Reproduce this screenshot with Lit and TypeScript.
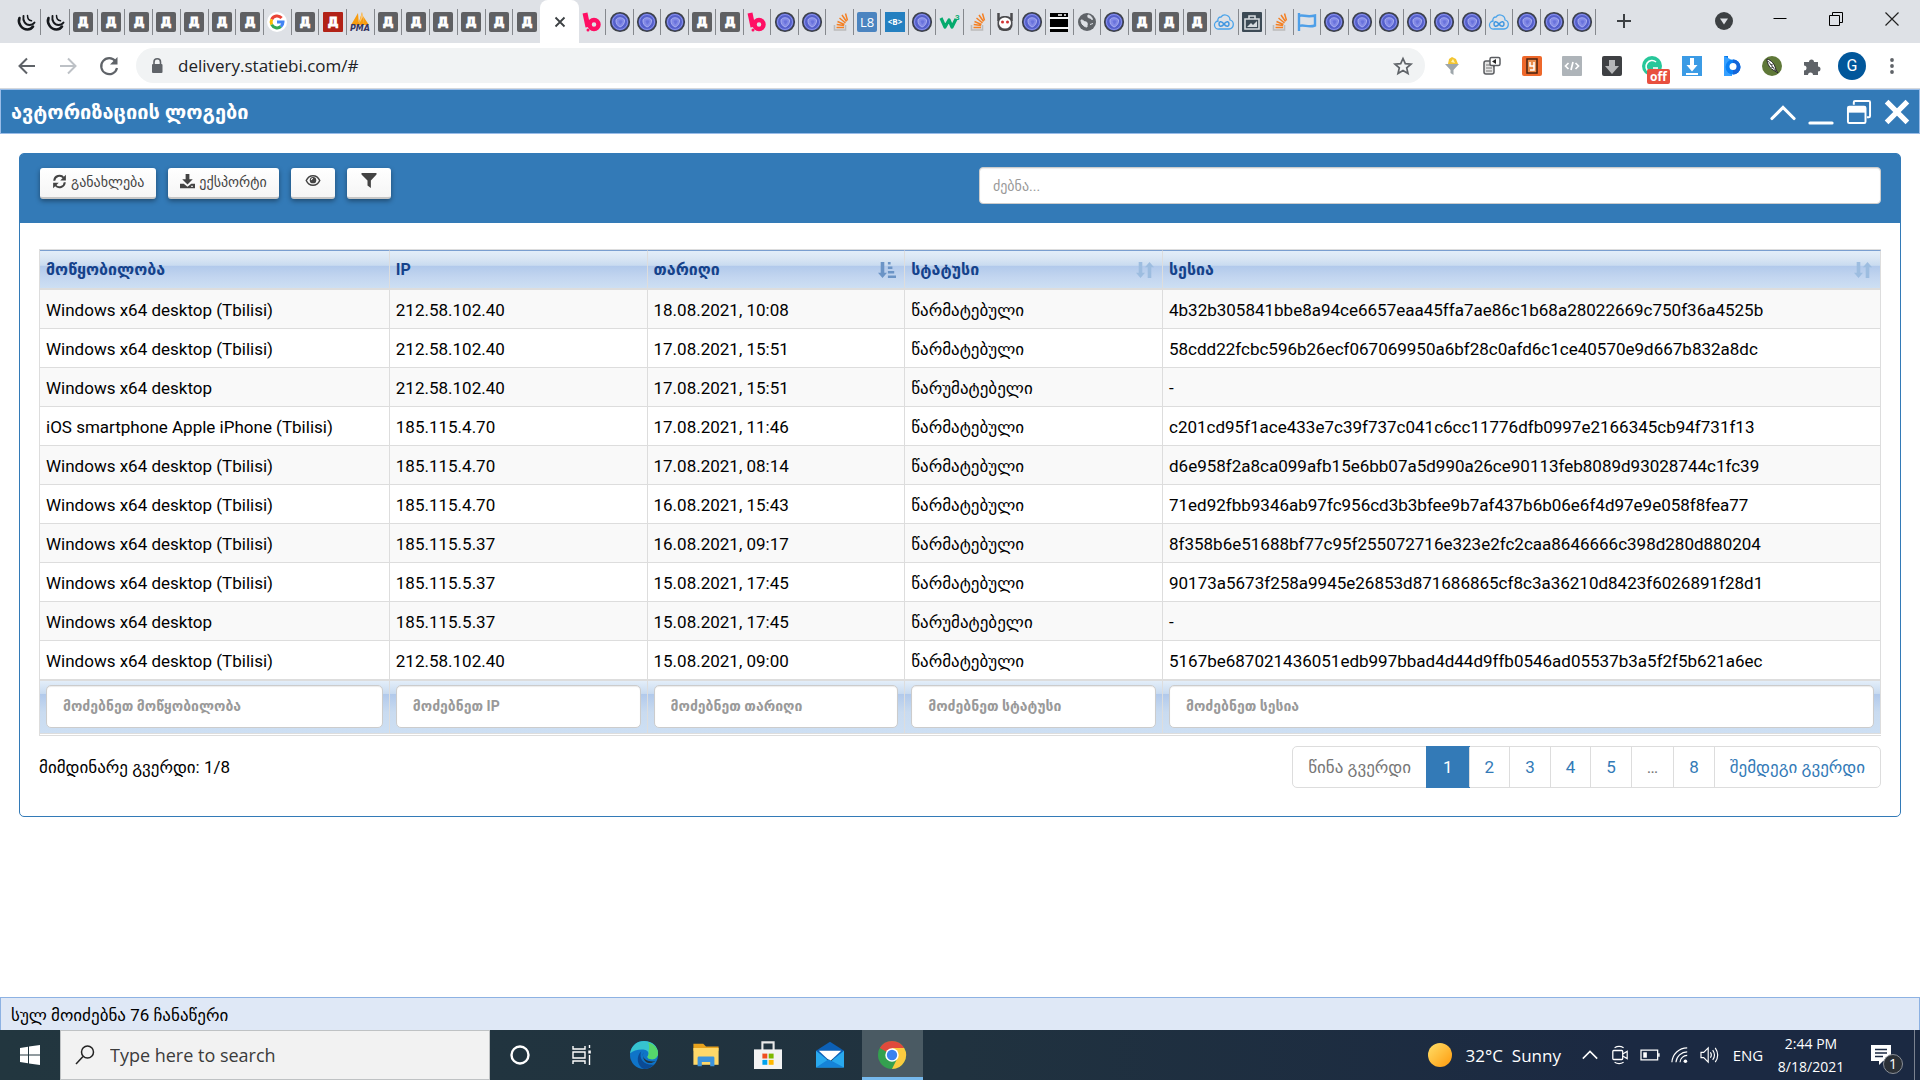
import { LitElement, html, svg, css, nothing } from "lit";
import { customElement, property } from "lit/decorators.js";

type Art = ReturnType<typeof svg>;

const letter = svg`<text x="10" y="14" text-anchor="middle" font-size="12" font-weight="bold" fill="#fff" stroke="#fff" stroke-width=".8" font-family="DejaVu Sans">Д</text>`;

const ART: Record<string, Art> = {
  swirl: svg`<g fill="none" stroke="#15181c" stroke-linecap="round"><path d="M3.500 6c-2 5 2 11.500 8 11.500 3 0 4.500-1.500 5.500-3" stroke-width="2.600"/><path d="M7.500 4c-1 5 2 9 6 9 2.500 0 4-1 5-2.500" stroke-width="1.900"/><path d="M11.500 3.500c0 3 1.500 5 4 5.300" stroke-width="1.500"/></g>`,
  mono: svg`<rect width="20" height="20" rx="2" fill="#5f6063"/>${letter}`,
  red: svg`<rect width="20" height="20" rx="1" fill="#b22217"/>${letter}`,
  google: svg`<circle cx="10" cy="10" r="10" fill="#fff"/><g fill="none" stroke-width="3"><path d="M14.600 6A6 6 0 0 0 4.700 7.400" stroke="#ea4335"/><path d="M4.700 7.400a6 6 0 0 0 0 5.200" stroke="#fbbc05"/><path d="M4.700 12.600a6 6 0 0 0 9.200 1.900" stroke="#34a853"/><path d="M13.900 14.500A6 6 0 0 0 16 10h-6" stroke="#4285f4"/></g>`,
  pma: svg`<path d="M1 13 8 1l1 12zM8 13l4-13 2 13zM14 13l-1-9 6 9z" fill="#f89c0e"/><path d="M9 12 12 0l1 5z" fill="#fbc774"/><text x="10" y="19" text-anchor="middle" font-size="8" font-weight="bold" font-style="italic" fill="#34345f" font-family="DejaVu Sans">PMA</text>`,
  pink: svg`<g fill="none" stroke="#ff0f64"><path d="M3 1l3 14" stroke-width="5"/><circle cx="12" cy="12.500" r="4.500" stroke-width="4.500"/></g><circle cx="6" cy="18" r="1.500" fill="#ff0f64"/>`,
  orb: svg`<circle cx="10" cy="10" r="9.300" fill="#5560cc" stroke="#3d4148" stroke-width="1.600"/><circle cx="10" cy="10" r="7.500" fill="none" stroke="#8a92ea" stroke-width="1"/><path d="M6 8c1-3 7-3 8.500 0 .5 3-2 6.500-4.500 7-2.500-1-4.500-4-4-7z" fill="#8289e6" stroke="#b6bbf4" stroke-width=".8"/><path d="M8.500 9c1-1 3-1 4 0-.5 2-1.500 3-2.500 3.500z" fill="#6a73dc"/>`,
  stack: svg`<path d="M4.500 13v5h11v-5" fill="none" stroke="#bcbbbb" stroke-width="1.600"/><g stroke="#f48024" stroke-width="1.500"><path d="M6.500 15.500h7.500M6.700 12.500l7.300 1M7.500 9.500l7 3M9.500 6l6 5M12 3l4.500 6.500M15.500 1.500l2 7"/></g>`,
  l8: svg`<rect width="20" height="20" rx="2" fill="#4b84c0"/><text x="10" y="15" text-anchor="middle" font-size="13" fill="#fff" font-family="Open Sans">L8</text>`,
  bold: svg`<rect width="20" height="20" fill="#2480c0"/><text x="10" y="13" text-anchor="middle" font-size="8" font-weight="bold" fill="#fff" font-family="Open Sans">&lt;B&gt;</text>`,
  w3: svg`<path d="M1 6l4 9 4-7 3 7 4-8" fill="none" stroke="#04aa6d" stroke-width="3.200" stroke-linejoin="round"/><text x="15" y="8" font-size="8" font-weight="bold" fill="#04aa6d" font-family="Roboto">3</text>`,
  hub: svg`<path d="M3.500 1v8M16.500 1v8" stroke="#4b4b4e" stroke-width="2.500"/><rect x="2.500" y="4" width="15" height="15" rx="6" fill="#4b4b4e"/><ellipse cx="10" cy="11" rx="6" ry="5.500" fill="#fff"/><circle cx="7.500" cy="10" r="1.500" fill="#d13434"/><circle cx="12.500" cy="10" r="1.500" fill="#d13434"/>`,
  screen: svg`<path d="M1 1h18v4H1zM1 7h18v8H1zM1 17h18v3H1z" fill="#000"/><path d="M0 6h20M0 16h20" stroke="#fff" stroke-width="1.500"/><path d="M9 3h4M15 3h2" stroke="#fff" stroke-width="1.400"/>`,
  globe: svg`<circle cx="10" cy="10" r="9" fill="#5f6368"/><path d="M4 8c2-.5 3 2 5 2s1 3 1 5c-3 0-6-3-6-7zM11 3c2 0 4 2 4.500 4.500-2 0-1.500-1.500-3-1.500s-2-1-1.500-3zM13 12.500l3-1" fill="#dee1e6" stroke="#dee1e6"/>`,
  cloud: svg`<path d="M5 17a4 4 0 0 1-1-8 3 3 0 0 1 3-4 5 5 0 0 1 9 3 4.600 4.600 0 0 1-1 9z" fill="none" stroke="#4aa3ea" stroke-width="1.300"/><path d="M10 12c-3-4-5-2-5 0s2 4 5 0 5-2 5 0-2 4-5 0z" fill="none" stroke="#3f96e0" stroke-width="1.500"/>`,
  bag: svg`<rect width="20" height="20" rx="1" fill="#3c4a55"/><path d="M3 7h14v10H3zM7 7V4h6v3" fill="none" stroke="#d6dbdf" stroke-width="1.600"/><path d="M5 15l4-4 2 2 4-4v6z" fill="#d6dbdf"/>`,
  flag: svg`<path d="M2 1v18M2 4c4-2 7 2 16-.500v10c-7 2.500-11-1.500-16 .5" fill="none" stroke="#4e9fe8" stroke-width="2.400"/>`,
  close: svg`<path d="M5.500 5.500l9 9m0-9l-9 9" stroke="#3c4043" stroke-width="1.800"/>`,
  plus: svg`<path d="M10 3v14M3 10h14" stroke="#3c4043" stroke-width="2"/>`,
  chevdisc: svg`<circle cx="10" cy="10" r="9" fill="#3c4043"/><path d="M6 7.500h8l-4 6z" fill="#dee1e6"/>`,
  min: svg`<path d="M3.500 9.500h13" stroke="#000"/>`,
  max: svg`<path d="M3.500 6.500h10v10h-10zM6.500 6.500v-3h10v10h-3" fill="none" stroke="#000"/>`,
  cross: svg`<path d="M3.500 3.500l13 13m0-13l-13 13" stroke="#222" stroke-width="1.200"/>`,
  back: svg`<path d="M18 10H3m7-7.500L2.500 10l7.500 7.500" fill="none" stroke="#5f6368" stroke-width="2"/>`,
  fwd: svg`<path d="M2 10h15m-7-7.500 7.500 7.500-7.500 7.500" fill="none" stroke="#bdc1c6" stroke-width="2"/>`,
  reload: svg`<path d="M16.500 5.200A8 8 0 1 0 18 12" fill="none" stroke="#5f6368" stroke-width="2.200"/><path d="M18.500 1v7.500H11z" fill="#5f6368"/>`,
  lock: svg`<rect x="5" y="8" width="10.500" height="9" rx="1" fill="#5f6368"/><path d="M7 8.500V6a3.200 3.200 0 0 1 6.500 0v2.500" fill="none" stroke="#5f6368" stroke-width="1.600"/>`,
  star: svg`<path d="M10 2.500l2.300 5.200 5.700.5-4.300 3.700 1.300 5.600-5-3-5 3 1.300-5.600L2 8.200l5.700-.5z" fill="none" stroke="#5f6368" stroke-width="1.700"/>`,
  funnel: svg`<path d="M3 8h14l-5.500 6v5l-3-2v-3z" fill="#9ea6ab"/><path d="M6 8l1-5 3-2 4 2 2 5z" fill="#f3c530"/><path d="M9 6l2-3 2 4z" fill="#fff3b0"/>`,
  copy: svg`<rect x="2" y="5" width="10" height="13" rx="2" fill="#e4e4e4" stroke="#5a5c60" stroke-width="1.500"/><path d="M4 9h5M4 12h6M4 15h6" stroke="#777"/><rect x="8" y="1.500" width="10" height="8" rx="1.500" fill="#fff" stroke="#5a5c60" stroke-width="1.500"/><path d="M14 3l-4 2.500L14 8z" fill="#222"/><path d="M11 9v3l3-3" fill="#5a5c60"/>`,
  orange: svg`<rect width="20" height="20" rx="2" fill="#ee682b"/><rect x="5" y="3" width="10" height="14" fill="#e98b4a" stroke="#47200f" stroke-width="1.500"/><path d="M8 6v4h4V6m0 3v5H8" fill="none" stroke="#fff" stroke-width="1.500"/>`,
  code: svg`<rect width="20" height="20" rx="1" fill="#aeb4b9"/><path d="M6.500 7L3.500 10l3 3M13.500 7l3 3-3 3M11 6l-2 8" fill="none" stroke="#fff" stroke-width="1.700"/>`,
  dark: svg`<rect width="20" height="20" rx="2" fill="#3e4043"/><path d="M7 4h6v6h4l-7 8-7-8h4z" fill="#b5b6b8"/>`,
  grammar: svg`<circle cx="10" cy="10" r="10" fill="#27c79a"/><path d="M14 6a6 6 0 1 0 1.500 7M11 12h5" fill="none" stroke="#fff" stroke-width="1.600"/>`,
  bluedown: svg`<rect width="20" height="20" fill="#3b9be5"/><path d="M8 2h4v7h3.500L10 15.500 4.500 9H8zM4 17h12v2H4z" fill="#fff"/>`,
  pblue: svg`<path d="M2 0h4v20L2 17z" fill="#0877e8"/><path d="M2 0l8 4v16H2z" fill="#36a0ff"/><circle cx="11" cy="11" r="7.500" fill="#0a80f5"/><path d="M11 3.500a7.500 7.500 0 0 1 0 15z" fill="#1565d8"/><circle cx="11" cy="10.500" r="3.500" fill="#fff"/>`,
  leaf: svg`<circle cx="10" cy="10" r="10" fill="#5f7838"/><path d="M5 3c4 1 8 5 9 11l2 3-3-2C8 13 5 8 5 3z" fill="#fff" stroke="#222"/><path d="M6 5l8 10M8 8l3 1M9 11l3 1" stroke="#333" stroke-width=".8"/>`,
  puzzle: svg`<path d="M2 6h5a2.500 2.500 0 1 1 5 0h4v4.500a2.500 2.500 0 1 1 0 5V19h-5a2.500 2.500 0 0 0-5 0H2v-4.500a2.500 2.500 0 0 0 0-5z" fill="#5f6368"/>`,
  dots: svg`<g fill="#5f6368"><circle cx="10" cy="4" r="1.900"/><circle cx="10" cy="10" r="1.900"/><circle cx="10" cy="16" r="1.900"/></g>`,
  up: svg`<path d="M1.500 15 10 6.500l8.500 8.500" fill="none" stroke="#fff" stroke-width="2.400" stroke-linecap="round"/>`,
  under: svg`<path d="M1.500 18.500h17" stroke="#fff" stroke-width="2.400" stroke-linecap="round"/>`,
  restore: svg`<path d="M6 4.500V2.500q0-1 1-1h10.500q1 0 1 1V13q0 1-1 1H16" fill="none" stroke="#fff" stroke-width="1.500"/><rect x="1.500" y="6" width="13.500" height="12.500" rx="1" fill="none" stroke="#fff" stroke-width="1.500"/><path d="M1.500 6H15v4.500H1.500z" fill="#fff"/>`,
  bigx: svg`<path d="M2 2l16 16M18 2L2 18" stroke="#fff" stroke-width="4"/>`,
  refresh: svg`<g fill="none" stroke="#444" stroke-width="2.700"><path d="M3 9a7 7 0 0 1 12.500-4M17 11a7 7 0 0 1-12.500 4"/></g><path d="M18.500 1v7.500H11zM1.500 19v-7.500H9z" fill="#444"/>`,
  download: svg`<path d="M7.500 0h5v7H17l-7 7-7-7h4.500zM0 13h5l5 4 5-4h5v6H0z" fill="#444"/><path d="M15 16.500h2" stroke="#fff" stroke-width="1.500"/>`,
  eye: svg`<path d="M1 10c4-8.500 14-8.500 18 0-4 8.500-14 8.500-18 0z" fill="none" stroke="#444" stroke-width="2"/><circle cx="10" cy="9.500" r="4.300" fill="#444"/><path d="M7.800 9.500A2.300 2.300 0 0 1 10 7.200" fill="none" stroke="#fff" stroke-width="1.400"/>`,
  filter: svg`<path d="M0 0h20v2l-7.500 8v10L8 16.500V10L0 2z" fill="#444"/>`,
  sorted: svg`<path d="M3 1h4v12h3l-5 6-5-6h3zM11 1h3v3h-3zM11 6h5v3h-5zM11 11h7v3h-7zM11 16h9v3h-9z" fill="#6b94c6"/>`,
  sortable: svg`<path d="M3 1h4v12h3l-5 6-5-6h3zM13 19h4V7h3l-5-6-5 6h3z" fill="#9dbde0"/>`,
  windows: svg`<path d="M0 3l8-1.200V9.500H0zM9 1.600L20 0v9.500H9zM0 10.500h8v7.800L0 17zM9 10.500h11V20L9 18.400z" fill="#fff"/>`,
  lens: svg`<circle cx="12.500" cy="7" r="6" fill="none" stroke="#222" stroke-width="1.500"/><path d="M8 11.500L1 19" stroke="#222" stroke-width="1.500"/>`,
  ring: svg`<circle cx="10" cy="10" r="8.500" fill="none" stroke="#fff" stroke-width="2.400"/>`,
  tasks: svg`<path d="M1 1v3h12V1M1 19v-3h12v3M1 7h12v6H1zM17.500 0v3M17.500 10v10" fill="none" stroke="#fff" stroke-width="1.400"/><path d="M16.300 5.500h2.500v3h-2.500z" fill="#fff"/>`,
  edge: svg`<circle cx="10" cy="10" r="10" fill="#0f74c8"/><path d="M0 9C1 3 5 0 10 0c6 0 10 4 10 8.500 0 3-2 4.500-4.500 4.500-2 0-3-.7-3-1.500 0-1 .8-1 .8-2.500C13.300 7 11 6 8.500 6 5 6 2 7 0 9z" fill="#36c3cf"/><path d="M13 1c4 1 7 4 7 7.500 0 3-2 4.500-4.500 4.500-2 0-3-.7-3-1.500 0-1 .8-1 .8-2.500 0-3 1-4-.3-8z" fill="#56d66b"/><path d="M8 7.500c-2 5 2 10 9 9.500-2 2-4.500 3-7 3-5-2-6-9-2-12.500z" fill="#0b4a94"/><path d="M9.500 8c-1.500 4 2 7 8.500 6.500-4 3-10 .5-8.500-6.500z" fill="#23343f"/>`,
  folder: svg`<path d="M1 2h7l2 2h9v3H1z" fill="#e8a21c"/><path d="M1 5h18v12H1z" fill="#ffd869"/><path d="M4 18v-6q0-1 1-1h10q1 0 1 1v6h-3v-3H7v3z" fill="#3c93dc"/>`,
  store: svg`<path d="M6 7V1h8v6" fill="none" stroke="#e8e8e8" stroke-width="1.500"/><path d="M0 6h20v14H0z" fill="#f3f3f3"/><path d="M6 9h3.500v3.500H6z" fill="#f04e1f"/><path d="M10.500 9H14v3.500h-3.500z" fill="#7eb900"/><path d="M6 13.500h3.500V17H6z" fill="#00a3ee"/><path d="M10.500 13.500H14V17h-3.500z" fill="#ffb800"/>`,
  mail: svg`<path d="M0 7l10-6.500L20 7v6H0z" fill="#0c60b6"/><path d="M0 7l10 8L20 7v12H0z" fill="#29a9ee"/><path d="M2 7h16l-8 7.500z" fill="#fff"/><path d="M0 19l9-6 11 6z" fill="#1583d8"/>`,
  chrome: svg`<circle cx="10" cy="10" r="10" fill="#34a04f"/><path d="M10 10 1.300 5A10 10 0 0 1 18.700 5z" fill="#e04a3c"/><path d="M10 10V5h8.700A10 10 0 0 1 10 20l4-8z" fill="#fbcb3f"/><circle cx="10" cy="10" r="4.800" fill="#fff"/><circle cx="10" cy="10" r="3.700" fill="#3c82ee"/>`,
  sun: svg`<defs><linearGradient id="s" x1="0" y1="0" x2="1" y2="1"><stop offset="0" stop-color="#ffe06a"/><stop offset="1" stop-color="#ff9a0c"/></linearGradient></defs><circle cx="10" cy="10" r="10" fill="url(#s)"/>`,
  trayup: svg`<path d="M2 14l8-8 8 8" fill="none" stroke="#fff" stroke-width="1.700"/>`,
  camera: svg`<rect x="2" y="5" width="11" height="10" rx="1" fill="none" stroke="#fff" stroke-width="1.400"/><path d="M13 9l5-3v8l-5-3M4 2q5-3 10 0M4 18q5 3 10 0" fill="none" stroke="#fff" stroke-width="1.300"/>`,
  battery: svg`<path d="M0 4.500h18.500v11H0zM20 8v4" fill="none" stroke="#fff" stroke-width="1.400"/><path d="M2.500 7h4v6h-4z" fill="#fff"/>`,
  wifi: svg`<g fill="none" stroke="#fff" stroke-width="1.300"><path d="M1 18A17 17 0 0 1 18 2M5.500 18A12.500 12.500 0 0 1 18 6.500M10 18a8 8 0 0 1 8-7.500"/></g><circle cx="16" cy="17" r="2" fill="#fff"/>`,
  sound: svg`<path d="M0 7h3l5-5v16l-5-5H0z" fill="none" stroke="#fff" stroke-width="1.300"/><path d="M10.500 7q2 3 0 6M13 4.500q4 5.500 0 11M15.800 2q5.500 8 0 16" fill="none" stroke="#fff" stroke-width="1.300"/>`,
  note: svg`<path d="M0 0h20v16h-8l-4 4v-4H0z" fill="#fff"/><path d="M4 4.500h12M4 8h12M4 11.500h8" stroke="#1b2942" stroke-width="1.300"/>`,
};

@customElement("ui-icon")
export class UiIcon extends LitElement {
  @property() name = "";
  static styles = css`
    :host { display: inline-flex; flex: none; width: 20px; height: 20px; }
    .art { display: block; width: 100%; height: 100%; overflow: visible; }
  `;
  render() {
    return html`<svg class="art" viewBox="0 0 20 20" aria-hidden="true">${ART[this.name]}</svg>`;
  }
}

const repeat = (name: string, n: number) => Array<string>(n).fill(name);

const LEFT_TABS = ["swirl", "swirl", ...repeat("mono", 7), "google", "mono", "red", "pma", ...repeat("mono", 6)];
const RIGHT_TABS = [
  "pink", ...repeat("orb", 3), "mono", "mono", "pink", "orb", "orb", "stack", "l8", "bold", "orb", "w3",
  "stack", "hub", "orb", "screen", "globe", "orb", ...repeat("mono", 3), "cloud", "bag", "stack", "flag",
  ...repeat("orb", 6), "cloud", ...repeat("orb", 3),
];
const EXTENSIONS = ["funnel", "copy", "orange", "code", "dark", "grammar", "bluedown", "pblue", "leaf", "puzzle"];

@customElement("browser-chrome")
export class BrowserChrome extends LitElement {
  static styles = css`
    :host { display: block; font-family: "Open Sans", "Noto Sans", sans-serif; }
    button { border: 0; padding: 0; background: none; font: inherit; display: flex; align-items: center; justify-content: center; }
    .strip { display: flex; height: 43px; background: #dee1e6; padding-left: 12px; }
    .tabs { display: flex; flex: 1; min-width: 0; }
    .group { display: flex; min-width: 0; align-items: center; }
    .before { flex: 528; }
    .after { flex: 1017; }
    .tab { flex: 1; min-width: 0; height: 26px; border-right: 1px solid #85888d; }
    .pinned { flex: none; width: 29px; }
    .before .tab:last-child { border-right: 0; }
    .active { flex: none; width: 39px; background: #fff; border-radius: 8px 8px 0 0; }
    .window { display: flex; width: 324px; }
    .cell { width: 56px; height: 42px; }
    .gap { flex: 1; }
    .caption { height: 38px; }
    .bar { display: flex; align-items: center; height: 45px; padding-right: 8px; background: #fff; border-bottom: 1px solid #d5d8dc; }
    .nav { width: 41px; height: 40px; }
    .lead { display: flex; padding: 0 7px 0 6px; }
    .omni { display: flex; flex: 1; align-items: center; height: 35px; border-radius: 18px; background: #f1f3f4; padding: 0 12px 0 11px; margin-right: 7px; }
    .url { flex: 1; min-width: 0; border: 0; background: none; outline: 0; padding: 0 0 0 11px; font: 17px "Open Sans", "Noto Sans", sans-serif; color: #202124; }
    .ext { position: relative; width: 40px; height: 40px; }
    .off { position: absolute; left: 15px; top: 23px; background: #e8503f; color: #fff; font-size: 12px; line-height: 15px; font-weight: 700; padding: 0 3px; border-radius: 2px; }
    .avatar { width: 28px; height: 28px; margin: 0 6px; border-radius: 50%; background: #01579b; color: #fff; font: 16px Roboto, sans-serif; }
  `;
  private tab = (name: string) =>
    html`<button class="tab ${name === "swirl" ? "pinned" : ""}" aria-label="Tab"><ui-icon name=${name}></ui-icon></button>`;
  render() {
    return html`
      <div class="strip">
        <div class="tabs">
          <div class="group before">${LEFT_TABS.map(this.tab)}</div>
          <button class="active" aria-label="Close tab"><ui-icon name="close"></ui-icon></button>
          <div class="group after">${RIGHT_TABS.map(this.tab)}</div>
        </div>
        <div class="window">
          <button class="cell" aria-label="New tab"><ui-icon name="plus"></ui-icon></button>
          <span class="gap"></span>
          <button class="cell" aria-label="Search tabs"><ui-icon name="chevdisc"></ui-icon></button>
          <button class="cell caption" aria-label="Minimize"><ui-icon name="min"></ui-icon></button>
          <button class="cell caption" aria-label="Restore"><ui-icon name="max"></ui-icon></button>
          <button class="cell caption" aria-label="Close"><ui-icon name="cross"></ui-icon></button>
        </div>
      </div>
      <div class="bar">
        <div class="lead">
          ${["back", "fwd", "reload"].map((n) => html`<button class="nav" aria-label=${n}><ui-icon name=${n}></ui-icon></button>`)}
        </div>
        <div class="omni">
          <ui-icon name="lock"></ui-icon>
          <input class="url" aria-label="Address" .value=${"delivery.statiebi.com/#"} />
          <button aria-label="Bookmark"><ui-icon name="star"></ui-icon></button>
        </div>
        ${EXTENSIONS.map(
          (n) => html`<button class="ext" aria-label=${n}>
            <ui-icon name=${n}></ui-icon>${n === "grammar" ? html`<span class="off">off</span>` : nothing}
          </button>`,
        )}
        <button class="avatar">G</button>
        <button class="ext" aria-label="Menu"><ui-icon name="dots"></ui-icon></button>
      </div>
    `;
  }
}

const OK = "წარმატებული";
const FAIL = "წარუმატებელი";
const PC = "Windows x64 desktop (Tbilisi)";
const ROWS: string[][] = [
  [PC, "212.58.102.40", "18.08.2021, 10:08", OK, "4b32b305841bbe8a94ce6657eaa45ffa7ae86c1b68a28022669c750f36a4525b"],
  [PC, "212.58.102.40", "17.08.2021, 15:51", OK, "58cdd22fcbc596b26ecf067069950a6bf28c0afd6c1ce40570e9d667b832a8dc"],
  ["Windows x64 desktop", "212.58.102.40", "17.08.2021, 15:51", FAIL, "-"],
  ["iOS smartphone Apple iPhone (Tbilisi)", "185.115.4.70", "17.08.2021, 11:46", OK, "c201cd95f1ace433e7c39f737c041c6cc11776dfb0997e2166345cb94f731f13"],
  [PC, "185.115.4.70", "17.08.2021, 08:14", OK, "d6e958f2a8ca099afb15e6bb07a5d990a26ce90113feb8089d93028744c1fc39"],
  [PC, "185.115.4.70", "16.08.2021, 15:43", OK, "71ed92fbb9346ab97fc956cd3b3bfee9b7af437b6b06e6f4d97e9e058f8fea77"],
  [PC, "185.115.5.37", "16.08.2021, 09:17", OK, "8f358b6e51688bf77c95f255072716e323e2fc2caa8646666c398d280d880204"],
  [PC, "185.115.5.37", "15.08.2021, 17:45", OK, "90173a5673f258a9945e26853d871686865cf8c3a36210d8423f6026891f28d1"],
  ["Windows x64 desktop", "185.115.5.37", "15.08.2021, 17:45", FAIL, "-"],
  [PC, "212.58.102.40", "15.08.2021, 09:00", OK, "5167be687021436051edb997bbad4d44d9ffb0546ad05537b3a5f2f5b621a6ec"],
];
const COLUMNS = [
  { label: "მოწყობილობა", cls: "wide", sort: "" },
  { label: "IP", cls: "mid", sort: "" },
  { label: "თარიღი", cls: "mid", sort: "sorted" },
  { label: "სტატუსი", cls: "mid", sort: "sortable" },
  { label: "სესია", cls: "rest", sort: "sortable" },
];
const PAGES = ["1", "2", "3", "4", "5", "…", "8"];

@customElement("log-window")
export class LogWindow extends LitElement {
  static styles = css`
    :host { display: flex; flex-direction: column; flex: 1; background: #fff; color: #000; font: 17px/26px Roboto, "DejaVu Sans", sans-serif; }
    * { box-sizing: border-box; }
    button, input { font: inherit; }
    .title { display: flex; align-items: center; justify-content: space-between; height: 45px; padding: 0 9px 0 10px; border: 1px solid #99bce8; background: #337ab7; color: #fff; }
    .name { margin: 0; font-size: 20px; font-weight: 700; }
    .controls { display: flex; gap: 12px; }
    .control { border: 0; padding: 0; background: none; display: flex; }
    .control ui-icon { width: 26px; height: 26px; }
    .body { flex: 1; padding: 19px; }
    .panel { border: 1px solid #337ab7; border-radius: 5px; padding-bottom: 28px; }
    .head { display: grid; grid-template-columns: 51fr 49fr; align-items: start; height: 69px; padding: 13px 19px 0 20px; background: #337ab7; border-radius: 3px 3px 0 0; }
    .tools { display: flex; gap: 12px; padding-top: 1px; }
    .tool { display: flex; align-items: center; gap: 4px; height: 31px; padding: 0 12px 2px; border: 0; border-bottom: 2px solid #c6c6c6; border-radius: 3px; background: linear-gradient(#fff, #f5f5f5); color: #444; font-size: 14px; box-shadow: 0 2px 5px rgba(0, 0, 0, 0.4); }
    .tool ui-icon { width: 15px; height: 15px; }
    .tool .lone { width: 18px; }
    .tool:has(.lone) { padding: 0 13px 4px; }
    .find { width: 100%; height: 37px; padding: 0 13px; border: 1px solid #ccc; border-radius: 4px; font-size: 14px; box-shadow: inset 0 1px 1px rgba(0, 0, 0, 0.08); }
    input::placeholder { color: #999; opacity: 1; }
    .content { padding: 26px 19px 0; }
    .grid { width: 100%; table-layout: fixed; border-spacing: 0; border: 1px solid #ddd; border-right: 0; padding-bottom: 1px; }
    .wide { width: 19%; }
    .mid { width: 14%; }
    .grid th, .grid td { border-right: 1px solid #ddd; padding: 0 6px; text-align: left; }
    .grid tbody td { height: 39px; padding-top: 1px; border-bottom: 1px solid #ddd; white-space: nowrap; overflow: hidden; }
    .grid tbody tr:nth-child(odd) { background: #f9f9f9; }
    .grid thead th { height: 40px; border-top: 1px solid #7a9fd0; border-bottom: 2px solid #ddd; background: linear-gradient(#e3eef9, #d9e6f4 20%, #c9dbf0 39%, #b1c9eb 40%, #c3d6f0 72%, #cddff3); }
    .sort { display: flex; align-items: center; justify-content: space-between; width: 100%; border: 0; padding: 0 2px 0 0; background: none; color: #15428b; font-weight: 700; font-size: 16px; }
    .sort ui-icon { width: 18px; height: 18px; }
    .grid tfoot th { height: 54px; padding-bottom: 2px; border-top: 1px solid #ddd; border-bottom: 1px solid #ddd; background: linear-gradient(#e3eef9, #c9dbf0 24%, #b1c9eb 25%, #c9dbf0 60%, #cddff3); }
    .colfind { display: block; width: 100%; height: 43px; padding: 0 16px; border: 1px solid #ccc; border-radius: 5px; background: #fff; font-size: 14px; font-weight: 700; box-shadow: inset 0 1px 1px rgba(0, 0, 0, 0.08); }
    .foot { display: flex; justify-content: space-between; align-items: center; margin-top: 10px; }
    .pages { display: flex; margin: 0; padding: 0; list-style: none; border: 1px solid #ddd; border-radius: 5px; }
    .pages li + li { border-left: 1px solid #ddd; }
    .link { display: block; padding: 8px 15px; line-height: 24px; color: #337ab7; text-decoration: none; }
    .off { color: #777; }
    .on { background: #337ab7; color: #fff; margin: -1px; padding: 9px 17px; }
    .status { height: 33px; padding: 2px 10px 0; border: 1px solid #8db2e3; border-bottom: 0; background: #dfe8f6; line-height: 30px; }
  `;
  render() {
    return html`
      <header class="title">
        <h1 class="name">ავტორიზაციის ლოგები</h1>
        <div class="controls">
          ${["up", "under", "restore", "bigx"].map((n) => html`<button class="control" aria-label=${n}><ui-icon name=${n}></ui-icon></button>`)}
        </div>
      </header>
      <main class="body">
        <section class="panel">
          <div class="head">
            <div class="tools">
              <button class="tool"><ui-icon name="refresh"></ui-icon>განახლება</button>
              <button class="tool"><ui-icon name="download"></ui-icon>ექსპორტი</button>
              <button class="tool" aria-label="View"><ui-icon class="lone" name="eye"></ui-icon></button>
              <button class="tool" aria-label="Filter"><ui-icon class="lone" name="filter"></ui-icon></button>
            </div>
            <input class="find" aria-label="ძებნა" placeholder="ძებნა..." />
          </div>
          <div class="content">
            <table class="grid">
              <thead>
                <tr>${COLUMNS.map((c) => html`<th class=${c.cls} scope="col"><button class="sort">${c.label}${c.sort ? html`<ui-icon name=${c.sort}></ui-icon>` : nothing}</button></th>`)}</tr>
              </thead>
              <tbody>
                ${ROWS.map((r) => html`<tr>${r.map((v) => html`<td>${v}</td>`)}</tr>`)}
              </tbody>
              <tfoot>
                <tr>${COLUMNS.map((c) => html`<th><input class="colfind" aria-label=${c.label} placeholder=${`მოძებნეთ ${c.label}`} /></th>`)}</tr>
              </tfoot>
            </table>
            <div class="foot">
              <span>მიმდინარე გვერდი: 1/8</span>
              <nav aria-label="გვერდი">
                <ul class="pages">
                  <li><a class="link off" href="#">წინა გვერდი</a></li>
                  ${PAGES.map((p) => html`<li><a class="link ${p === "1" ? "on" : p === "…" ? "off" : ""}" href="#">${p}</a></li>`)}
                  <li><a class="link" href="#">შემდეგი გვერდი</a></li>
                </ul>
              </nav>
            </div>
          </div>
        </section>
      </main>
      <footer class="status">სულ მოიძებნა 76 ჩანაწერი</footer>
    `;
  }
}

@customElement("task-bar")
export class TaskBar extends LitElement {
  static styles = css`
    :host { display: flex; height: 50px; background: linear-gradient(90deg, #22363f, #20323f 50%, #1b2942 85%); color: #fff; font-family: "Open Sans", "Noto Sans", sans-serif; }
    * { box-sizing: border-box; }
    button { border: 0; padding: 0; background: none; color: inherit; font: inherit; display: flex; align-items: center; justify-content: center; }
    .start { width: 60px; }
    .search { display: flex; align-items: center; gap: 15px; width: 430px; padding: 0 14px; background: #f2f2f2; border: 1px solid #bfc2c4; color: #333; }
    .query { flex: 1; min-width: 0; border: 0; background: none; outline: 0; padding: 0; font: 18px "Open Sans", "Noto Sans", sans-serif; }
    .query::placeholder { color: #3b3b3b; opacity: 1; }
    .app { width: 62px; padding-right: 2px; }
    .app ui-icon { width: 28px; height: 28px; }
    .app .thin { width: 20px; height: 20px; }
    .active { width: 61px; background: #4a5a63; border-bottom: 3px solid #76b9ed; padding-top: 3px; }
    .tray { display: flex; align-items: center; margin-left: auto; }
    .weather { display: flex; align-items: center; gap: 14px; font-size: 17px; padding-right: 14px; white-space: pre; }
    .weather ui-icon { width: 24px; height: 24px; }
    .item { width: 30px; height: 50px; }
    .item ui-icon { width: 18px; height: 18px; }
    .lang { width: 46px; font-size: 15px; }
    .clock { width: 80px; text-align: center; font-size: 14px; line-height: 23px; white-space: nowrap; }
    .alerts { position: relative; width: 60px; height: 50px; margin-right: 3px; }
    .count { position: absolute; left: 32px; top: 24px; width: 20px; height: 20px; border: 1px solid #8a8f97; border-radius: 50%; background: #2b3036; font-size: 14px; line-height: 18px; text-align: center; }
    .edge { width: 6px; height: 50px; border-left: 1px solid #7b8290; }
  `;
  render() {
    return html`
      <button class="start" aria-label="Start"><ui-icon name="windows"></ui-icon></button>
      <label class="search">
        <ui-icon name="lens"></ui-icon>
        <input class="query" placeholder="Type here to search" />
      </label>
      ${["ring", "tasks", "edge", "folder", "store", "mail"].map(
        (n, i) => html`<button class="app" aria-label=${n}><ui-icon class=${i < 2 ? "thin" : ""} name=${n}></ui-icon></button>`,
      )}
      <button class="app active" aria-label="chrome"><ui-icon name="chrome"></ui-icon></button>
      <div class="tray">
        <button class="weather"><ui-icon name="sun"></ui-icon><span>32°C  Sunny</span></button>
        ${["trayup", "camera", "battery", "wifi", "sound"].map((n) => html`<button class="item" aria-label=${n}><ui-icon name=${n}></ui-icon></button>`)}
        <button class="lang">ENG</button>
        <div class="clock">2:44 PM<br />8/18/2021</div>
        <button class="alerts" aria-label="Notifications"><ui-icon name="note"></ui-icon><span class="count">1</span></button>
        <span class="edge"></span>
      </div>
    `;
  }
}

@customElement("app-root")
export class AppRoot extends LitElement {
  static styles = css`
    :host { display: flex; flex-direction: column; min-height: 100vh; }
  `;
  render() {
    return html`<browser-chrome></browser-chrome><log-window></log-window><task-bar></task-bar>`;
  }
}
